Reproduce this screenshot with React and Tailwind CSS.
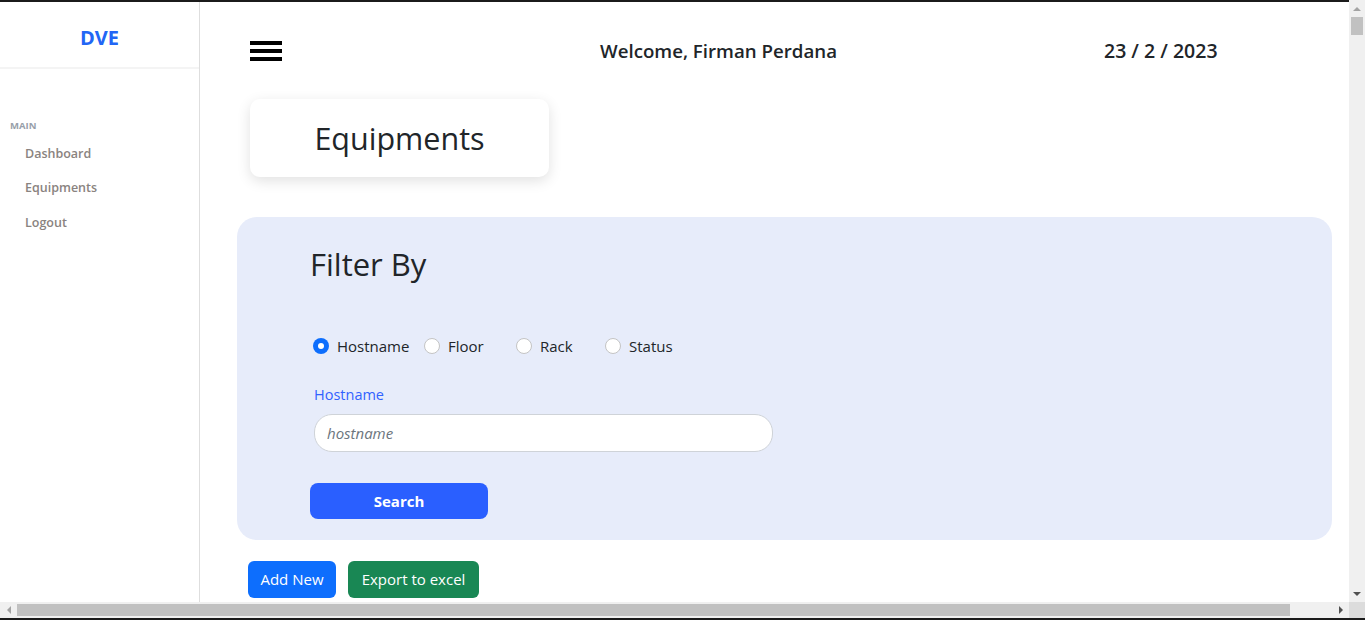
import { useState } from "react"

const font = { fontFamily: '"Open Sans", "Noto Sans", sans-serif' }

function Sidebar() {
  return (
    <aside className="w-[200px] shrink-0 border-r border-[#dedede] bg-white">
      <div className="h-[67px] flex items-center justify-center border-b-2 border-[#f4f4f4] pt-[6px]">
        <span className="text-[20px] font-bold text-[#2266f5]">DVE</span>
      </div>
      <div className="pt-[52px] pl-[10px] text-[9.5px] font-bold text-[#98a0aa] leading-none">MAIN</div>
      <nav className="mt-[14px] flex flex-col gap-[16.5px] pl-[25px] text-[12.5px] font-semibold text-[#8a8380] leading-[18px]">
        <a href="#">Dashboard</a>
        <a href="#">Equipments</a>
        <a href="#">Logout</a>
      </nav>
    </aside>
  )
}

function Radio({ label, checked, onChange, width }) {
  return (
    <label className={`flex items-center gap-[8px] cursor-pointer ${width}`}>
      {checked ? (
        <span className="w-[16px] h-[16px] rounded-full bg-[#0d6efd] flex items-center justify-center">
          <span className="w-[6px] h-[6px] rounded-full bg-white" />
        </span>
      ) : (
        <span className="w-[16px] h-[16px] rounded-full bg-white border border-[#c4c4c4]" />
      )}
      <input type="radio" className="hidden" checked={checked} onChange={onChange} />
      <span className="text-[15px] text-[#212529]">{label}</span>
    </label>
  )
}

export default function App() {
  const [filter, setFilter] = useState("Hostname")
  const options = [
    { name: "Hostname", width: "w-[111px]" },
    { name: "Floor", width: "w-[92px]" },
    { name: "Rack", width: "w-[89px]" },
    { name: "Status", width: "w-[80px]" },
  ]

  return (
    <div className="h-[620px] w-[1365px] flex flex-col overflow-hidden bg-white" style={font}>
      <div className="flex flex-1 min-h-0">
        <div className="flex-1 flex flex-col min-w-0">
          <div className="h-[2px] bg-[#1b1b1b]" />
          <div className="flex flex-1 min-h-0 overflow-hidden">
            <Sidebar />

            <main className="flex-1 pl-[37px]">
              {/* header */}
              <div className="mt-[29px] ml-[13px] h-[40px] flex items-center">
                <div className="w-[32px] flex flex-col gap-[4px]">
                  <span className="h-[4px] bg-black" />
                  <span className="h-[4px] bg-black" />
                  <span className="h-[4px] bg-black" />
                </div>
                <div className="ml-[318px] text-[18.7px] font-semibold text-[#212529]">Welcome, Firman Perdana</div>
                <div className="ml-[267px] text-[19.5px] font-semibold text-[#212529]">23 / 2 / 2023</div>
              </div>

              {/* page title */}
              <div className="mt-[28px] ml-[13px] w-[299px] h-[78px] rounded-[10px] bg-white shadow-[0_4px_14px_rgba(0,0,0,0.12)] flex items-center justify-center">
                <h1 className="text-[30.5px] font-medium text-[#212529] pt-[2px]">Equipments</h1>
              </div>

              {/* filter panel */}
              <section className="mt-[40px] w-[1095px] h-[323px] rounded-[20px] bg-[#e7ecfa] pl-[73px] pt-[26px]">
                <h2 className="text-[31px] font-medium text-[#212529] leading-[42px]">Filter By</h2>

                <div className="mt-[50px] ml-[3px] flex items-center h-[22px]">
                  {options.map((o) => (
                    <Radio
                      key={o.name}
                      label={o.name}
                      width={o.width}
                      checked={filter === o.name}
                      onChange={() => setFilter(o.name)}
                    />
                  ))}
                </div>

                <div className="mt-[28px] ml-[4px] text-[14.5px] font-medium text-[#3162ff] leading-[20px]">{filter}</div>
                <input
                  type="text"
                  placeholder={filter.toLowerCase()}
                  className="mt-[9px] ml-[4px] block w-[459px] h-[38px] rounded-[18px] border border-[#cfd3d8] bg-white px-[12px] text-[15px] italic text-[#212529] placeholder:text-[#6c757d] outline-none"
                />
                <button className="mt-[31px] w-[178px] h-[36px] rounded-[8px] bg-[#2a5fff] text-white text-[15px] font-bold">
                  Search
                </button>
              </section>

              {/* actions */}
              <div className="mt-[21px] ml-[11px] flex gap-[12px]">
                <button className="w-[88px] h-[37px] rounded-[6px] bg-[#0d6efd] text-white text-[15px]">Add New</button>
                <button className="w-[131px] h-[37px] rounded-[6px] bg-[#198754] text-white text-[15px]">Export to excel</button>
              </div>
            </main>
          </div>
        </div>

        {/* vertical scrollbar */}
        <div className="w-[16px] shrink-0 bg-[#f0f0f0] flex flex-col items-center">
          <div className="h-[17px] flex items-center justify-center">
            <span className="w-0 h-0 border-l-[4px] border-r-[4px] border-b-[4px] border-l-transparent border-r-transparent border-b-[#a3a3a3]" />
          </div>
          <div className="w-[12px] h-[18px] bg-[#c1c1c1]" />
          <div className="flex-1" />
          <div className="h-[17px] flex items-center justify-center">
            <span className="w-0 h-0 border-l-[4px] border-r-[4px] border-t-[4px] border-l-transparent border-r-transparent border-t-[#505050]" />
          </div>
        </div>
      </div>

      {/* horizontal scrollbar */}
      <div className="h-[16px] shrink-0 flex bg-[#f0f0f0]">
        <div className="w-[17px] flex items-center justify-center">
          <span className="w-0 h-0 border-t-[4px] border-b-[4px] border-r-[4px] border-t-transparent border-b-transparent border-r-[#a3a3a3]" />
        </div>
        <div className="flex-1 flex items-center">
          <div className="w-[1273px] h-[12px] bg-[#c1c1c1]" />
        </div>
        <div className="w-[17px] flex items-center justify-center">
          <span className="w-0 h-0 border-t-[4px] border-b-[4px] border-l-[4px] border-t-transparent border-b-transparent border-l-[#505050]" />
        </div>
        <div className="w-[16px] bg-[#dcdcdc]" />
      </div>
      <div className="h-[2px] shrink-0 bg-[#1b1b1b]" />
    </div>
  )
}
